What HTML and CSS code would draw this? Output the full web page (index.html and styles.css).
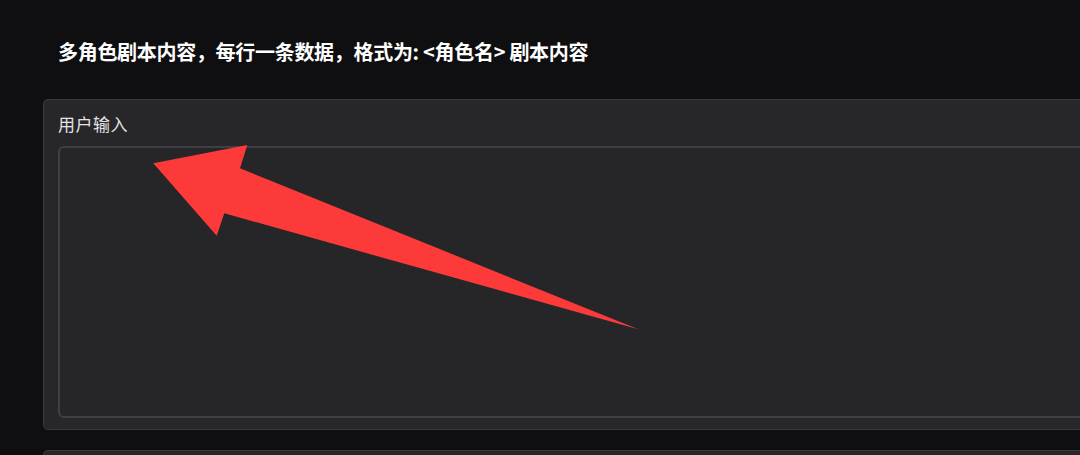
FILE: index.html
```html
<!DOCTYPE html>
<html lang="zh-CN">
<head>
    <meta charset="UTF-8">
    <meta name="viewport" content="width=device-width, initial-scale=1.0">
    <title>多角色剧本</title>
    <link rel="stylesheet" href="styles.css">
</head>
<body>

    <div class="page">
        <h3 class="hint">多角色剧本内容，每行一条数据，格式为: &lt;角色名&gt; 剧本内容</h3>

        <div class="card">
            <label class="card-label" for="user-input">用户输入</label>
            <textarea id="user-input" class="script-input"></textarea>
        </div>

        <div class="card card-next"></div>

        <!-- 标注箭头 -->
        <svg class="arrow" width="520" height="220" viewBox="0 0 520 220">
            <polygon points="13.3,33.3 107.3,15 100,38.3 498.3,199.3 84.3,83.3 76.7,105.7" fill="#fc3a3a"/>
        </svg>
    </div>

</body>
</html>
```

FILE: styles.css
```css
body {
    font-family: "Noto Sans CJK SC", "Noto Sans", sans-serif;
    background-color: #0f0f11;
    color: #f2f2f2;
    margin: 0;
    overflow: hidden; /* 右侧超出部分不显示 */
}

.page {
    position: relative;
    width: 1240px;
    padding: 0 0 0 43px;
}

.hint {
    font-size: 20px;
    font-weight: 700;
    line-height: 28px;
    letter-spacing: -0.3px;
    margin: 0;
    padding: 38px 0 0 15px;
    height: 61px;
    color: #ffffff;
}

.card {
    background-color: #272729;
    border: 1px solid #3b3b3e;
    border-radius: 5px;
    padding: 12px 14px 11px 14px;
}

.card-label {
    display: block;
    font-size: 17px;
    line-height: 24px;
    letter-spacing: 0.5px;
    color: #e4e4e6;
    margin-bottom: 10px;
}

.script-input {
    display: block;
    box-sizing: border-box;
    width: 100%;
    height: 272px;
    margin: 0;
    background-color: #262628;
    border: 2px solid #403f47;
    border-radius: 6px;
    resize: none;
    outline: none;
}

.card-next {
    margin-top: 20px;
    height: 40px;
}

.arrow {
    position: absolute;
    left: 140px;
    top: 130px;
}
```
